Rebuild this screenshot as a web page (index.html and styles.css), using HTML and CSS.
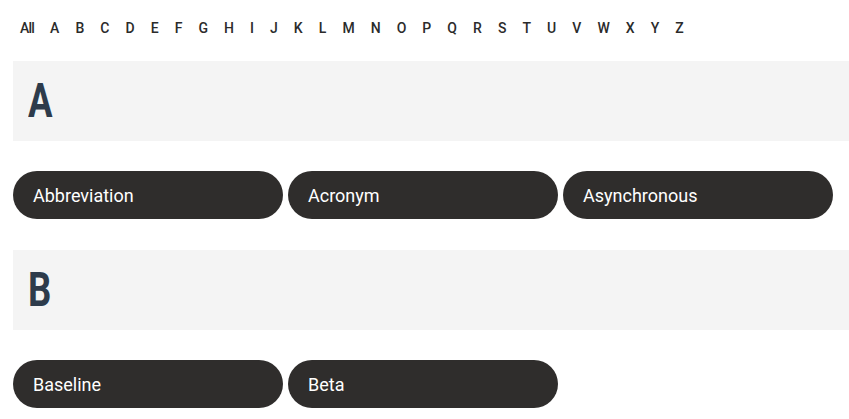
FILE: index.html
```html
<!DOCTYPE html>
<html>
<head>
<meta charset="utf-8">
<link rel="stylesheet" href="styles.css">
</head>
<body>
<div class="page">
  <nav class="alpha">
    <a class="all">All</a><a>A</a><a>B</a><a>C</a><a>D</a><a>E</a><a>F</a><a>G</a><a>H</a><a>I</a><a>J</a><a>K</a><a>L</a><a>M</a><a>N</a><a>O</a><a>P</a><a>Q</a><a>R</a><a>S</a><a>T</a><a>U</a><a>V</a><a>W</a><a>X</a><a>Y</a><a>Z</a>
  </nav>
  <section class="group">
    <h2 class="letter"><span class="cond">A</span></h2>
    <div class="terms">
      <a class="term">Abbreviation</a>
      <a class="term">Acronym</a>
      <a class="term">Asynchronous</a>
    </div>
  </section>
  <section class="group">
    <h2 class="letter"><span class="cond">B</span></h2>
    <div class="terms">
      <a class="term">Baseline</a>
      <a class="term">Beta</a>
    </div>
  </section>
</div>
</body>
</html>
```
FILE: styles.css
```css
html, body {
  margin: 0;
  padding: 0;
  background: #fff;
}
body {
  font-family: Roboto, "Liberation Sans", sans-serif;
  color: #333;
  overflow: hidden;
}
.page {
  padding-left: 13px;
}
.alpha {
  display: flex;
  align-items: flex-start;
  padding-top: 19px;
  margin-left: -1px;
  height: 61px;
  box-sizing: border-box;
}
.alpha a {
  font-size: 14px;
  line-height: 18px;
  padding: 0 8px;
  color: #2b2b2b;
  font-weight: 500;
  letter-spacing: 0.05px;
}
.alpha a.all {
  letter-spacing: -0.8px;
}
.group {
  margin-bottom: 31px;
}
.letter {
  margin: 0;
  height: 80px;
  background: #f4f4f4;
  padding-left: 15px;
  font-size: 48px;
  line-height: 80px;
  font-weight: 700;
  color: #2d3b4b;
  box-sizing: border-box;
}
.cond {
  display: inline-block;
  transform: scaleX(0.76);
  transform-origin: left center;
}
.terms {
  display: flex;
  gap: 5px;
  margin-top: 30px;
}
.term {
  width: 270px;
  height: 48px;
  box-sizing: border-box;
  border-radius: 24px;
  background: #2f2d2c;
  color: #fff;
  font-size: 18px;
  line-height: 50px;
  padding-left: 20px;
}
```
